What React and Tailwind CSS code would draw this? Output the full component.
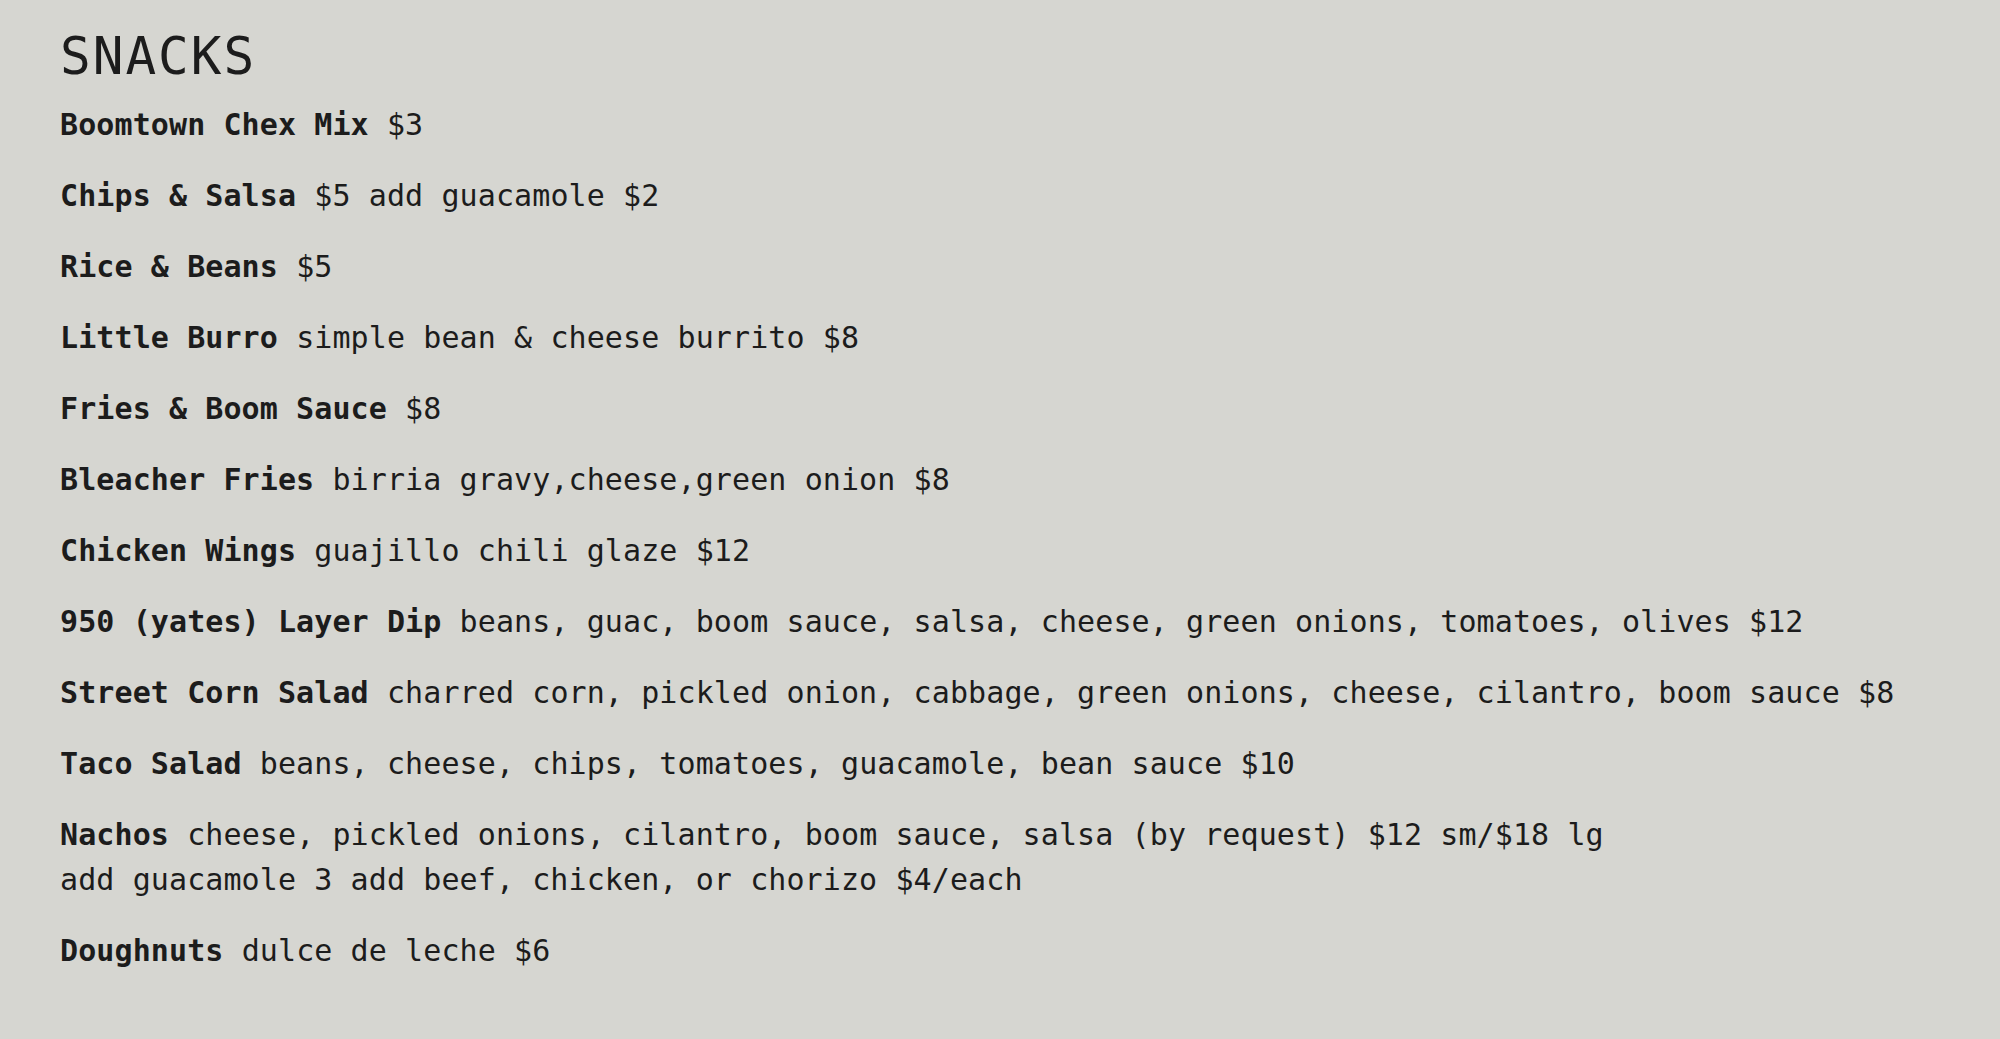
// App.jsx
const items = [
  { name: "Boomtown Chex Mix", desc: "$3" },
  { name: "Chips & Salsa", desc: "$5 add guacamole $2" },
  { name: "Rice & Beans", desc: "$5" },
  { name: "Little Burro", desc: "simple bean & cheese burrito $8" },
  { name: "Fries & Boom Sauce", desc: "$8" },
  { name: "Bleacher Fries", desc: "birria gravy,cheese,green onion $8" },
  { name: "Chicken Wings", desc: "guajillo chili glaze $12" },
  {
    name: "950 (yates) Layer Dip",
    desc: "beans, guac, boom sauce, salsa, cheese, green onions, tomatoes, olives $12",
  },
  {
    name: "Street Corn Salad",
    desc: "charred corn, pickled onion, cabbage, green onions, cheese, cilantro, boom sauce $8",
  },
  {
    name: "Taco Salad",
    desc: "beans, cheese, chips, tomatoes, guacamole, bean sauce $10",
  },
  {
    name: "Nachos",
    desc: "cheese, pickled onions, cilantro, boom sauce, salsa (by request) $12 sm/$18 lg",
    extra: "add guacamole 3 add beef, chicken, or chorizo $4/each",
  },
  { name: "Doughnuts", desc: "dulce de leche $6" },
];

export default function App() {
  return (
    <div className="min-h-screen bg-[#d6d6d1] text-[#1c1c1c] px-[60px] pt-[27px] pb-10 font-['DejaVu_Sans_Mono',monospace]">
      {/* section title */}
      <h2 className="text-[51px] leading-[60px] tracking-[2px] font-normal">
        SNACKS
      </h2>

      {/* menu list */}
      <div className="mt-[15px] flex flex-col gap-[26px]">
        {items.map((item) => (
          <p key={item.name} className="text-[30px] leading-[45px] tracking-[0.1px]">
            <span className="font-bold">{item.name}</span> {item.desc}
            {item.extra && (
              <>
                <br />
                {item.extra}
              </>
            )}
          </p>
        ))}
      </div>
    </div>
  );
}
